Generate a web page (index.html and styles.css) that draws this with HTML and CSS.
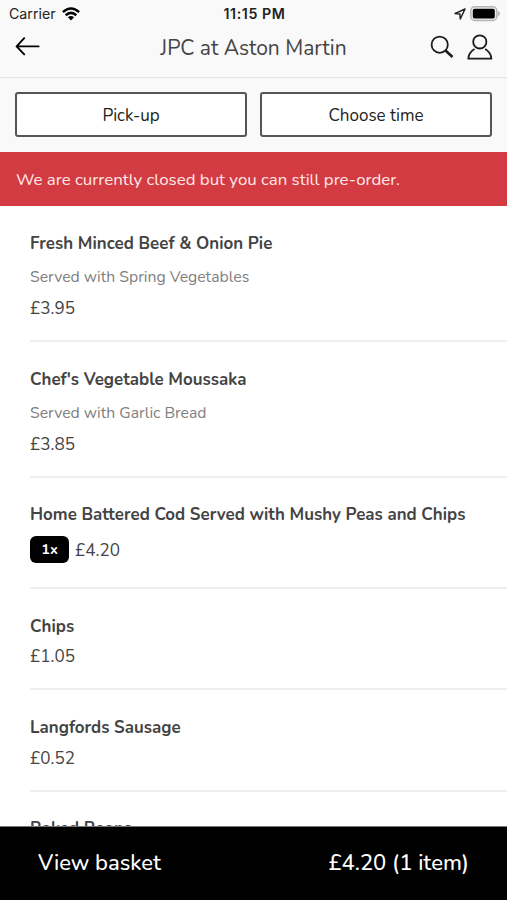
FILE: index.html
```html
<!DOCTYPE html>
<html lang="en">
<head>
<meta charset="utf-8">
<title>JPC at Aston Martin</title>
<link rel="stylesheet" href="styles.css">
</head>
<body>
<div class="app">
  <div class="status">
    <div class="carrier">
      <span>Carrier</span>
      <svg width="18" height="14" viewBox="0 0 18 14" fill="none" stroke="#000" stroke-width="2.5"><path d="M.9 5.2Q9-2.3 17.1 5.2M3.7 8.3Q9 3.5 14.3 8.3"/><path d="M5.9 10.2Q9 7.6 12.1 10.2L9 13.6Z" fill="#000" stroke="none"/></svg>
    </div>
    <div class="clock">11:15 PM</div>
    <div class="power">
      <svg width="12" height="12" viewBox="0 0 12 12" fill="none" stroke="#222" stroke-width="1.5" stroke-linejoin="round"><path d="M11 1 1 5.6l4.9.5.4 4.9Z"/></svg>
      <svg width="30" height="16" viewBox="0 0 30 16"><rect x=".8" y=".8" width="26" height="13.7" rx="4" fill="#eee" stroke="#b4b4b4" stroke-width="1.5"/><rect x="2.8" y="2.8" width="22" height="9.7" rx="1.8"/><path d="M28 4.8q4 2.8 0 5.6Z" fill="#b4b4b4"/></svg>
    </div>
  </div>
  <header class="nav">
    <svg width="26" height="20" viewBox="0 0 26 20" fill="none" stroke="#000" stroke-width="1.9" stroke-linecap="round" stroke-linejoin="round"><path d="M24.6 9.4H2.6M10.2 1.2 2.6 9.4l7.6 8"/></svg>
    <h1>JPC at Aston Martin</h1>
    <div class="actions">
      <svg width="24" height="26" viewBox="0 0 24 26" fill="none" stroke="#1b1b1b"><circle cx="9.7" cy="10.7" r="8.1" stroke-width="1.8"/><path d="m15.5 16.5 7 6.5" stroke-width="2.6"/></svg>
      <svg width="26" height="26" viewBox="0 0 26 26" fill="none" stroke="#1b1b1b" stroke-width="1.8"><circle cx="12.8" cy="7.9" r="6.6"/><path d="M7.5 14.9Q1.5 18.6 1.4 24.6H24.3Q24.1 18.6 18.2 14.9"/></svg>
    </div>
  </header>
  <div class="options">
    <button>Pick-up</button>
    <button>Choose time</button>
  </div>
  <p class="notice">We are currently closed but you can still pre-order.</p>
  <main class="menu">
    <article class="item tall"><h2>Fresh Minced Beef &amp; Onion Pie</h2><p class="desc">Served with Spring Vegetables</p><div class="price">£3.95</div></article>
    <article class="item tall"><h2>Chef's Vegetable Moussaka</h2><p class="desc">Served with Garlic Bread</p><div class="price">£3.85</div></article>
    <article class="item ordered"><h2>Home Battered Cod Served with Mushy Peas and Chips</h2><div class="line"><span class="qty">1x</span><span class="price">£4.20</span></div></article>
    <article class="item short"><h2>Chips</h2><div class="price">£1.05</div></article>
    <article class="item short last"><h2>Langfords Sausage</h2><div class="price">£0.52</div></article>
    <article class="item clipped"><h2>Baked Beans</h2></article>
  </main>
  <footer class="basket"><span class="view">View basket</span><span class="total">£4.20 (1 item)</span></footer>
</div>
</body>
</html>
```
FILE: styles.css
```css
* { box-sizing: border-box; }
body, h1, h2, p { margin: 0; }
body { background: #fff; font-family: Nunito, Lato, sans-serif; }
svg { display: block; flex: none; }
.app { display: flex; flex-direction: column; width: 507px; height: 900px; overflow: hidden; }

.status { display: grid; grid-template-columns: 1fr auto 1fr; align-items: center; height: 27px; padding: 0 7px 0 9px; background: #f9f9f9; font: 14.2px/27px Inter, sans-serif; color: #222; }
.carrier { display: flex; align-items: center; gap: 6px; }
.clock { font-weight: 600; letter-spacing: .6px; }
.power { display: flex; align-items: center; justify-content: flex-end; gap: 4px; }

.nav { display: grid; grid-template-columns: 76px 1fr 76px; align-items: center; height: 51px; padding: 2px 14px 12px; background: #f9f9f9; border-bottom: 1px solid #e5e5e5; }
.nav h1 { padding-top: 2px; font-size: 21px; font-weight: 400; line-height: 30px; text-align: center; color: #444; white-space: nowrap; }
.actions { display: flex; gap: 13px; justify-content: flex-end; }

.options { display: grid; grid-template-columns: 232px 232px; gap: 13px; height: 74px; padding: 14px 15px 15px; background: #f9f9f9; }
.options button { padding: 2px 0 0; border: 2px solid #555; border-radius: 3px; background: #fff; color: #222; font: 17px Nunito, Lato, sans-serif; }
.notice { height: 54px; padding-left: 16px; background: #d33b43; color: #ffe9e7; font-size: 16.85px; line-height: 55px; white-space: nowrap; }

.menu { flex: 1; min-height: 0; overflow: hidden; padding-left: 30px; }
.item { border-bottom: 2px solid #eee; color: #444; }
.item h2 { font-size: 16.9px; font-weight: 700; line-height: 24px; white-space: nowrap; letter-spacing: .02px; }
.tall { height: 136px; padding-top: 26px; }
.desc { margin-top: 10px; font-size: 15.75px; line-height: 22px; color: #808080; }
.price { font-size: 17.1px; line-height: 24px; }
.tall .price { margin-top: 9px; }
.ordered { height: 111px; padding-top: 25px; }
.line { display: flex; align-items: center; gap: 6px; margin-top: 9px; }
.line .price { padding-top: 2px; }
.qty { width: 39px; height: 27px; border-radius: 6px; background: #000; color: #fff; font-size: 14.5px; font-weight: 700; line-height: 27px; text-align: center; }
.short { height: 101px; padding-top: 26px; }
.short .price { margin-top: 6px; }
.last { height: 102px; }
.last .price { margin-top: 7px; }
.clipped { padding-top: 25px; }

.basket { display: flex; justify-content: space-between; flex: none; height: 74px; padding: 0 38px; border-top: 1px solid #777; background: #000; color: #fff; font-size: 22px; font-weight: 500; line-height: 73px; }
```
